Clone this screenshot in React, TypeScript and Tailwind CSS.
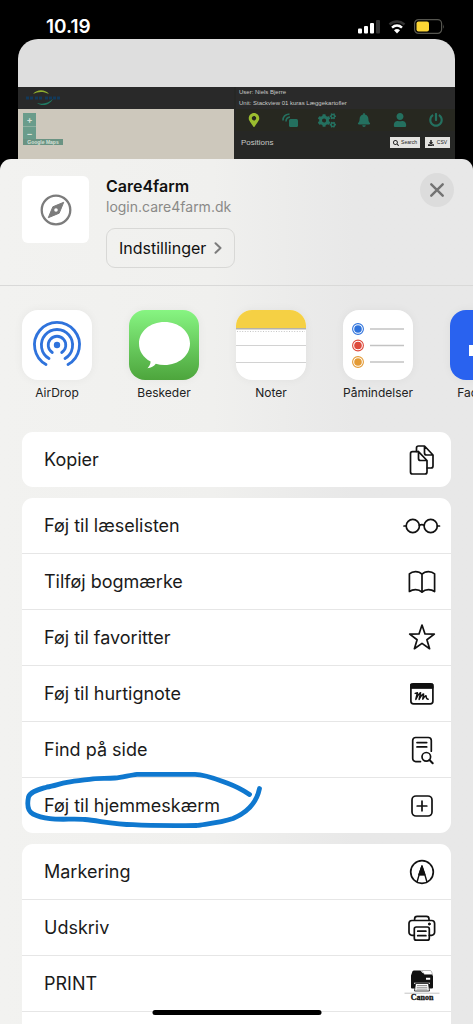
import type { ReactNode } from "react";
import { FaBell, FaCogs, FaDownload, FaMapMarkerAlt, FaPowerOff, FaSearch, FaUser } from "react-icons/fa";

type Action = {
  label: string;
  icon: ReactNode;
  circled?: boolean;
};

function Glyph({ children }: { children: ReactNode }) {
  return (
    <svg
      viewBox="0 0 40 40"
      className="h-10 w-10 shrink-0"
      fill="none"
      stroke="#111111"
      strokeWidth="1.7"
      strokeLinecap="round"
      strokeLinejoin="round"
      aria-hidden="true"
    >
      {children}
    </svg>
  );
}

const copyActions: Action[] = [
  {
    label: "Kopier",
    icon: (
      <Glyph>
        <path d="M16.5 11.7H10.5a2 2 0 0 0-2 2V32a2 2 0 0 0 2 2H23a2 2 0 0 0 2-2V20.5L16.5 11.7V18.5a2 2 0 0 0 2 2H25" />
        <path d="M14.5 11.5V8a2 2 0 0 1 2-2H22.5L31 15V26a2 2 0 0 1-2 2H25.2M22.5 6v7a2 2 0 0 0 2 2H31" />
      </Glyph>
    ),
  },
];

const pageActions: Action[] = [
  {
    label: "Føj til læselisten",
    icon: (
      <Glyph>
        <circle cx="10.8" cy="20" r="6.6" />
        <circle cx="28.7" cy="20" r="6.6" />
        <path d="M17.3 19.2q2.5-1.2 5 0M2 20h2.2M35.3 20h2.2" />
      </Glyph>
    ),
  },
  {
    label: "Tilføj bogmærke",
    icon: (
      <Glyph>
        <path d="M20 12.300c-1.700-1.900-3.900-2.700-6.500-2.700-2.300 0-4.500.8-6.100 2.300v17.600c1.800-1.300 3.900-1.900 6.100-1.900 2.500 0 4.700.8 6.500 2.600 1.800-1.800 4-2.600 6.500-2.600 2.200 0 4.300.6 6.100 1.900V11.900c-1.600-1.500-3.800-2.300-6.100-2.300-2.600 0-4.800.8-6.500 2.700zM20 12.300v17.900" />
      </Glyph>
    ),
  },
  {
    label: "Føj til favoritter",
    icon: (
      <Glyph>
        <path d="M20 7l3 9 9.300.1-7.400 5.600 2.700 9L20 25.400l-7.600 5.300 2.700-9-7.400-5.600L17 16z" />
      </Glyph>
    ),
  },
  {
    label: "Føj til hurtignote",
    icon: (
      <Glyph>
        <rect x="8.900" y="9.900" width="22" height="20" rx="2.600" />
        <path d="M9 10h22v4.300H9z" fill="#111111" strokeWidth="1" />
        <path d="M13.200 19.400l2.200-.6-1.600 6.600c1.500-3.200 3.200-6.200 4.800-6.700l-1.500 6.700c1.500-3.200 3-5.200 4.500-5.500l-.8 5.300c1.500-2.700 2.200-3.500 3.200-3.500.4 1.200-.3 3.500 2.200 3.600" strokeWidth="1.500" />
      </Glyph>
    ),
  },
  {
    label: "Find på side",
    icon: (
      <Glyph>
        <path d="M18.500 31.600H13.700a3 3 0 0 1-3-3V10.500a3 3 0 0 1 3-3h12.600a3 3 0 0 1 3 3v10.700M15 12.600h9.700M15 16.900h9.700" />
        <circle cx="24.300" cy="26.800" r="4.300" />
        <path d="M27.500 30l3.200 3.300" strokeWidth="2" />
      </Glyph>
    ),
  },
  {
    label: "Føj til hjemmeskærm",
    circled: true,
    icon: (
      <Glyph>
        <rect x="10" y="10" width="20" height="20" rx="4" />
        <path d="M20 15.200v9.600M15.200 20h9.600" />
      </Glyph>
    ),
  },
];

const toolActions: Action[] = [
  {
    label: "Markering",
    icon: (
      <Glyph>
        <circle cx="20" cy="20" r="11.300" />
        <path d="M15.200 29.500l1.900-6.800h5.800l1.900 6.800M17.100 22.700L20 14l2.900 8.700" strokeWidth="1.400" />
        <path d="M20 14l3 8.800h-6z" fill="#111111" strokeWidth="1" />
      </Glyph>
    ),
  },
  {
    label: "Udskriv",
    icon: (
      <Glyph>
        <path d="M12.300 27.300H10a3 3 0 0 1-3-3v-8.800a3 3 0 0 1 3-3h19.600a3 3 0 0 1 3 3v8.800a3 3 0 0 1-3 3h-2.300M12.600 12.300v-1.400a2.500 2.500 0 0 1 2.500-2.500h9.400a2.500 2.500 0 0 1 2.500 2.500v1.400" />
        <rect x="12.300" y="19" width="15" height="13.200" rx="2" />
        <path d="M15.700 23.200h8.200M15.700 27.700h8.200" />
        <circle cx="27.300" cy="16" r="1" fill="#111111" strokeWidth="1" />
      </Glyph>
    ),
  },
  {
    label: "PRINT",
    icon: (
      <svg viewBox="0 0 40 40" className="h-10 w-10 shrink-0" aria-hidden="true">
        <path d="M9 11.500L10.500 7.300Q11 6.500 12 6.500h6.500l2 2.500h9l1.500 3.300V23.500q0 1-1 1H10q-1 0-1-1z" fill="#111111" />
        <path d="M19.500 6.500h8.500q1 0 1.500 1l1 3h-8z" fill="#ffffff" stroke="#777777" strokeWidth=".5" />
        <path d="M24 13.700h4.200v2H24zM12 18.800h16v1H12z" fill="#ffffff" />
        <path d="M13.500 19.500h13l1 7.500h-15z" fill="#ffffff" stroke="#111111" strokeWidth=".8" />
        <path d="M15 21.500h10M14.700 23.300h10.600M14.500 25.100h11" stroke="#777777" strokeWidth=".8" />
        <path d="M2.500 29.200h35" stroke="#aaaaaa" strokeWidth=".7" />
        <text x="20" y="36" textAnchor="middle" fontSize="8" fontWeight="900" fontFamily="Liberation Serif, serif" fill="#111111" stroke="#111111" strokeWidth=".3">
          Canon
        </text>
      </svg>
    ),
  },
];

function StatusBar() {
  return (
    <div className="flex h-[39px] shrink-0 items-end justify-between pr-[28px] pb-px pl-[46px] text-white">
      <span className="text-[19px] leading-[22px] font-semibold">10.19</span>
      <div className="flex items-center gap-2 pb-1">
        <svg viewBox="0 0 22 14" className="h-[14px] w-[22px]" aria-hidden="true">
          <rect x="0" y="8.500" width="4" height="5" rx="1" fill="#fff" />
          <rect x="6" y="6" width="4" height="7.500" rx="1" fill="#fff" />
          <rect x="12" y="3" width="4" height="10.500" rx="1" fill="#fff" />
          <rect x="18" y="0" width="4" height="13.500" rx="1" fill="#333" />
        </svg>
        <svg viewBox="0 0 18 14" className="h-[14px] w-[18px]" fill="none" aria-hidden="true">
          <path d="M1.500 4.500C6 .5 12 .5 16.500 4.500" stroke="#333" strokeWidth="2.400" />
          <path d="M4 7.600c3-2.700 7-2.700 10 0" stroke="#fff" strokeWidth="2.500" />
          <path d="M6 10.200c1.800-1.600 4.200-1.600 6 0L9 13.500z" fill="#fff" />
        </svg>
        <svg viewBox="0 0 31 15" className="h-[15px] w-[31px]" aria-hidden="true">
          <rect x=".6" y=".6" width="27" height="13.800" rx="4" fill="none" stroke="#55554f" strokeWidth="1.200" />
          <rect x="2.500" y="2.500" width="12.500" height="10" rx="2" fill="#fcd535" />
          <path d="M29 5.200q1.500 2.300 0 4.600z" fill="#55554f" />
        </svg>
      </div>
    </div>
  );
}

function BrowserPreview() {
  return (
    <div className="mx-[18px] h-[120px] shrink-0 overflow-hidden rounded-t-[20px] bg-[#dedede]">
      <div className="h-12" />
      <div className="flex h-[72px] bg-[#262725]">
        <div className="flex-1 bg-[#cdc8bc]">
          <div className="flex h-[22px] items-center bg-[#292929] pl-[5px]">
            <svg viewBox="0 0 40 20" className="h-5 w-10" fill="none" aria-hidden="true">
              <path d="M10 6C14 1 22 1 26 6 20 3 15 3.500 10 6z" fill="#8fae2f" />
              <path d="M30 11c-3 6-11 8-16 4 6 1.500 11 .5 16-4z" fill="#1f7a62" />
              <path d="M3 10h8M12 10h8M22 10h15" stroke="#12395a" strokeWidth="3" strokeDasharray="3 1" />
            </svg>
          </div>
          <div className="flex flex-col items-start pt-1 pl-[5px] text-[#d5e0d6]">
            <button type="button" aria-label="Zoom ind" className="flex h-[14px] w-[13px] items-center justify-center border-b border-[#8fb0a1] bg-[#6a9c8b] text-[9px] leading-none font-bold">
              +
            </button>
            <button type="button" aria-label="Zoom ud" className="flex h-3 w-[13px] items-center justify-center bg-[#6a9c8b] text-[9px] leading-none font-bold">
              −
            </button>
            <span className="flex h-[6px] w-10 items-center justify-center bg-[#6a9383] font-['Liberation_Sans',sans-serif] text-[5px] leading-none font-bold">
              Google Maps
            </span>
          </div>
        </div>
        <div className="ml-[2px] w-[219px] overflow-hidden font-['Liberation_Sans',sans-serif] text-[#c9c9c6]">
          <div className="h-[22px] bg-[#2a2a2a] pl-[3px] text-[6px] leading-[11px]">
            <div>User: Niels Bjerre</div>
            <div>Unit: Stackview 01 kuras Læggekartofler</div>
          </div>
          <div className="flex h-[22px] items-center justify-between bg-[#272820] pr-[11px] pl-[10px] text-[14px] text-[#24705f]">
            <FaMapMarkerAlt className="w-4 text-[#9bbd2f]" />
            <svg viewBox="0 0 16 14" className="h-[14px] w-4" fill="none" aria-hidden="true">
              <rect x="7" y="6" width="9" height="8" rx="1.500" fill="#24705f" />
              <path d="M1 7.500Q1 1.500 7.500 1M4 8.500Q4 4.500 8 4" stroke="#24705f" strokeWidth="1.600" />
            </svg>
            <FaCogs className="w-[18px] text-[17px]" />
            <FaBell className="w-4" />
            <FaUser className="w-4" />
            <FaPowerOff className="w-4" />
          </div>
          <div className="flex h-[23px] items-center px-[5px]">
            <span className="flex-1 text-[8px]">Positions</span>
            <button type="button" className="mr-[5px] flex h-[11px] w-[30px] items-center justify-center gap-[2px] bg-[#e4e4e1] text-[5px] text-[#222222]">
              <FaSearch className="text-[6px]" />
              Search
            </button>
            <button type="button" className="flex h-[11px] w-[25px] items-center justify-center gap-[3px] bg-[#e4e4e1] text-[5px] text-[#222222]">
              <FaDownload className="text-[6px]" />
              CSV
            </button>
          </div>
        </div>
      </div>
    </div>
  );
}

function SheetHeader() {
  return (
    <header className="flex items-start border-b border-[#d9d9d8] px-[22px] py-[17px]">
      <div className="flex h-[67px] w-[67px] shrink-0 items-center justify-center rounded-md bg-white">
        <svg viewBox="0 0 32 32" className="h-8 w-8" fill="none" aria-hidden="true">
          <circle cx="16" cy="16" r="14.300" stroke="#7c7c7c" strokeWidth="2.300" />
          <path d="M23.700 8.300l-4.500 10.900L8.300 23.700l4.500-10.900z" fill="#7c7c7c" stroke="#7c7c7c" strokeWidth="1" strokeLinejoin="round" />
          <circle cx="16" cy="16" r="1.800" fill="#ffffff" />
        </svg>
      </div>
      <div className="ml-[17px] flex-1">
        <h1 className="text-[16px] leading-5 font-semibold text-[#111111]">Care4farm</h1>
        <p className="text-[14px] leading-[22px] text-[#8a8a88]">login.care4farm.dk</p>
        <button
          type="button"
          className="mt-[10px] flex h-10 items-center gap-2 rounded-[9px] border border-[#d8d8d6] px-3 text-[16px] text-[#111111]"
        >
          Indstillinger
          <svg viewBox="0 0 8 12" className="h-3 w-2" fill="none" stroke="#7c7c7c" strokeWidth="2" strokeLinecap="round" strokeLinejoin="round" aria-hidden="true">
            <path d="M1.500 1.200L6.500 6l-5 4.800" />
          </svg>
        </button>
      </div>
      <button
        type="button"
        aria-label="Luk"
        className="-mt-[3px] -mr-[3px] flex h-[34px] w-[34px] items-center justify-center rounded-full bg-[#dcdcdc]"
      >
        <svg viewBox="0 0 14 14" className="h-[14px] w-[14px]" stroke="#737373" strokeWidth="2.400" strokeLinecap="round" aria-hidden="true">
          <path d="M1.300 1.300l11.400 11.400M12.700 1.300L1.300 12.700" />
        </svg>
      </button>
    </header>
  );
}

const apps = [
  {
    name: "AirDrop",
    tile: "bg-white",
    art: (
      <g fill="none" stroke="#2f73dc" strokeWidth="2.800" strokeLinecap="round">
        <circle cx="35" cy="35" r="3.200" fill="#2f73dc" stroke="none" />
        <path d="M30.300 42.500A8.800 8.800 0 1 1 39.700 42.500" />
        <path d="M27 48.500A15.600 15.600 0 1 1 43 48.500" />
        <path d="M24 54.500A22.500 22.500 0 1 1 46 54.500" />
      </g>
    ),
  },
  {
    name: "Beskeder",
    tile: "bg-linear-to-b from-[#87f582] to-[#4da53c]",
    art: <path d="M35.500 12C50 12 61 21.500 61 33.500S50 55 35.500 55c-3 0-6-.4-8.700-1.200-1.800 2.500-4.800 4-8.300 4.400 1.700-1.700 3-4 3.100-6.700C14 47.500 10 41 10 33.500 10 21.500 21 12 35.500 12z" fill="#ffffff" />,
  },
  {
    name: "Noter",
    tile: "bg-white",
    art: (
      <g>
        <rect width="70" height="18" fill="#f5d044" />
        <path d="M0 18.700h70" stroke="#b5b2a8" strokeWidth="1.400" />
        <path d="M1 21.500h68" stroke="#c6c6c6" strokeWidth="1.200" strokeDasharray="1 1.600" />
        <path d="M0 35.500h70M0 52.500h70" stroke="#d2d2d2" strokeWidth="1.100" />
      </g>
    ),
  },
  {
    name: "Påmindelser",
    tile: "bg-white",
    art: (
      <g fill="none">
        <g strokeWidth="1.100">
          <circle cx="15" cy="19" r="5.400" stroke="#2f73dc" />
          <circle cx="15" cy="35.500" r="5.400" stroke="#de4a3c" />
          <circle cx="15" cy="52" r="5.400" stroke="#e39a35" />
        </g>
        <circle cx="15" cy="19" r="3.800" fill="#2f73dc" />
        <circle cx="15" cy="35.500" r="3.800" fill="#de4a3c" />
        <circle cx="15" cy="52" r="3.800" fill="#e39a35" />
        <path d="M27 19h34M27 35.500h34M27 52h34" stroke="#c3c3c3" strokeWidth="1.700" />
      </g>
    ),
  },
  {
    name: "Facebook",
    tile: "bg-[#2962ef]",
    art: <path d="M19 35h9V26q0-12 12-12h8v10h-6q-4 0-4 4v7h10l-2 10h-8v25H28V46h-9z" fill="#ffffff" />,
  },
];

function AppRow() {
  return (
    <ul className="flex gap-[37px] overflow-hidden px-[22px] pt-6 pb-[30px]">
      {apps.map((app) => (
        <li key={app.name} className="shrink-0">
          <button type="button" className="flex w-[70px] flex-col items-center gap-1">
            <span className={`h-[70px] w-[70px] overflow-hidden rounded-2xl shadow-[0_0_10px_rgba(0,0,0,0.05)] ${app.tile}`}>
              <svg viewBox="0 0 70 70" className="h-[70px] w-[70px]" aria-hidden="true">
                {app.art}
              </svg>
            </span>
            <span className="text-[12px] leading-[18px] whitespace-nowrap text-[#222222]">{app.name}</span>
          </button>
        </li>
      ))}
    </ul>
  );
}

function ActionList({ actions, more = false }: { actions: Action[]; more?: boolean }) {
  return (
    <ul className="divide-y divide-[#e6e6e6] rounded-[11px] bg-white">
      {actions.map((action) => (
        <li key={action.label} className="relative">
          <button
            type="button"
            className="flex h-[55px] w-full items-center justify-between pr-[9px] pl-[22px] text-left text-[18px] text-[#1a1a1a]"
          >
            {action.label}
            {action.icon}
          </button>
          {action.circled && <PenCircle />}
        </li>
      ))}
      {more && <li className="h-[55px]" />}
    </ul>
  );
}

// hand-drawn marker ring, runs slightly over the row above
function PenCircle() {
  return (
    <svg
      viewBox="22 770 244 62"
      className="pointer-events-none absolute -top-2 left-0 h-[62px] w-[244px]"
      fill="none"
      stroke="#0f78cf"
      strokeWidth="4.800"
      strokeLinecap="round"
      strokeLinejoin="round"
      aria-hidden="true"
    >
      <path d="M249.500 794.500C243 790 235 786 227 783C215 778.500 205 774.300 195 774.300H137C130 775 122 777.500 115 778C107 778.700 100 778 93 778.800C84 780 75 781 67 782.300C60 783.500 54 786 47 787C39 789.500 30 791.500 28.500 797C27.300 803 27 811 33 814C39 817 45 818 50 818.700C60 820 75 818.500 85 819.500C100 821 115 824.500 133 824.700C155 826 180 825.500 197 825.500C205 824 220 823 233 818.500C248 812 257 801 259.500 788.500" />
    </svg>
  );
}

export default function App() {
  return (
    <div className="relative flex h-screen flex-col overflow-hidden bg-black font-[Inter,sans-serif]">
      <StatusBar />
      <BrowserPreview />
      <main className="min-h-0 flex-1 overflow-hidden rounded-t-[11px] bg-linear-to-r from-[#f2f2f0] via-[#f0f0ee] via-45% to-[#e8e8e8] to-75%">
        <SheetHeader />
        <AppRow />
        <div className="flex flex-col gap-[11px] px-[22px]">
          <ActionList actions={copyActions} />
          <ActionList actions={pageActions} />
          <ActionList actions={toolActions} more />
        </div>
      </main>
      <div className="absolute bottom-[9px] left-1/2 h-[5px] w-[169px] -translate-x-1/2 rounded-full bg-black" />
    </div>
  );
}
